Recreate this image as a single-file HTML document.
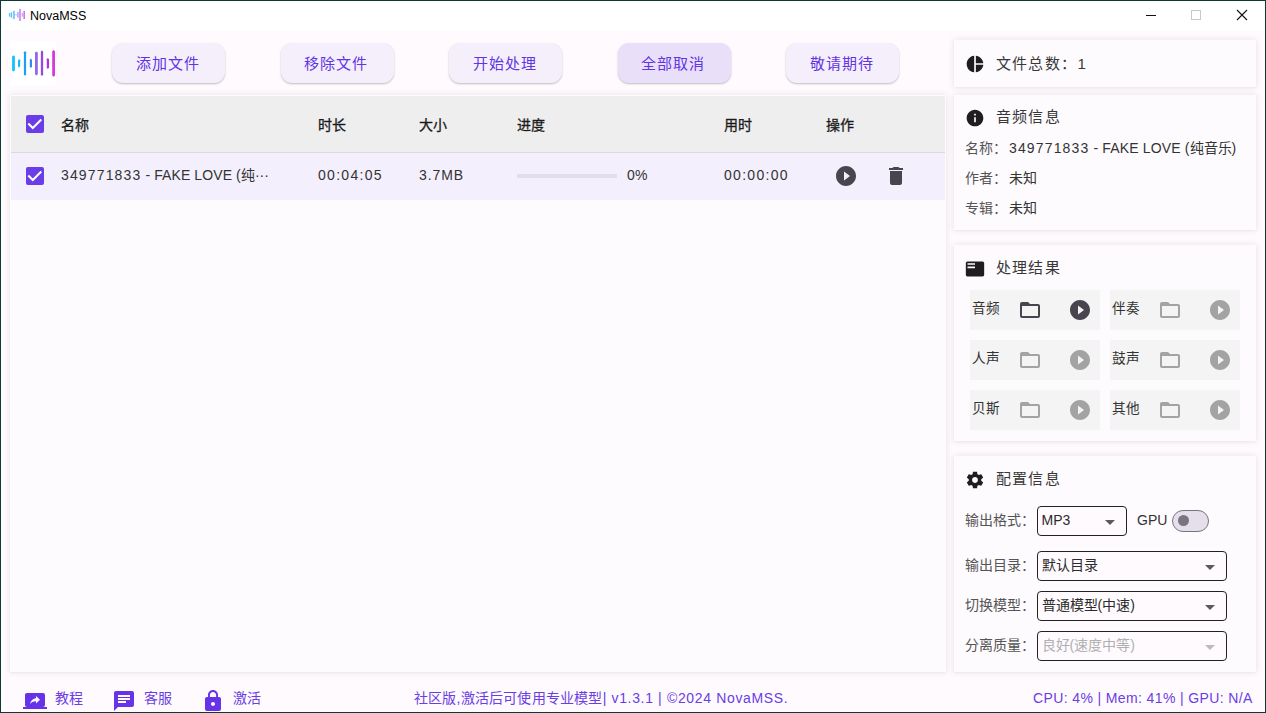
<!DOCTYPE html>
<html lang="zh-CN"><head><meta charset="utf-8">
<style>
*{margin:0;padding:0;box-sizing:border-box}
html,body{width:1266px;height:713px;overflow:hidden}
body{position:relative;font-family:"Liberation Sans",sans-serif;background:#fefafe;color:#333}
.abs{position:absolute}
#frame{position:absolute;left:0;top:0;width:1266px;height:713px;border:1px solid #0e3a34;pointer-events:none;z-index:50}
#title{left:0;top:0;width:1266px;height:31px;background:#fff}
.btn{position:absolute;top:43px;width:113px;height:40px;border-radius:11px;background:#f4effb;box-shadow:0 1px 2px rgba(0,0,0,.25);color:#6234e4;font-size:15px;letter-spacing:.9px;line-height:40px;text-align:center;padding:1px 1.5px 0 0}
.card{position:absolute;background:#fefbfe;box-shadow:0 0 6px 1px rgba(0,0,0,.075),0 1px 2px rgba(0,0,0,.03)}
.th{position:absolute;top:116px;font-size:14px;color:#1a1a1a;-webkit-text-stroke:.3px #1a1a1a;line-height:18px}
.td{position:absolute;top:166px;font-size:14px;color:#333;line-height:18px}
.chk{position:absolute;width:18px;height:18px;border-radius:2px;background:#6a3de8}
.chk svg{position:absolute;left:0;top:0}
.lbl{position:absolute;font-size:14px;color:#555;line-height:18px}
.val{position:absolute;font-size:14px;color:#333;line-height:18px}
.ctitle{position:absolute;font-size:15px;letter-spacing:1.4px;color:#383838;line-height:20px;margin-top:-.5px;margin-left:-.5px}
.cell{position:absolute;width:129.5px;height:40px;background:#f4f4f4}
.cell .t{position:absolute;left:1.5px;top:10px;font-size:13.6px;color:#333;line-height:18px}
.sel{position:absolute;border:1px solid #222;border-radius:4px;height:30px;background:#fefafe}
.sel .t{position:absolute;left:3.5px;top:4.3px;font-size:14px;color:#2b2b2b;line-height:18px}
.sel .ar{position:absolute;top:13px;width:0;height:0;border-left:5px solid transparent;border-right:5px solid transparent;border-top:5px solid #5a5a5a}
.foot{position:absolute;top:689px;font-size:14px;color:#6a3ee2;line-height:18px}
</style></head><body>
<div id="frame"></div>
<div id="title" class="abs"></div>
<div class="abs" style="left:30px;top:9px;font-size:12.5px;color:#000;line-height:15px">NovaMSS</div>

<!-- toolbar buttons -->
<div class="btn" style="left:112px">添加文件</div>
<div class="btn" style="left:280.5px">移除文件</div>
<div class="btn" style="left:449px">开始处理</div>
<div class="btn" style="left:617.5px;background:#e9dff8">全部取消</div>
<div class="btn" style="left:786px">敬请期待</div>

<!-- table card -->
<div class="card" style="left:10px;top:95px;width:936px;height:577px"></div>
<div class="abs" style="left:11px;top:96px;width:934px;height:56px;background:#eeeeee"></div>
<div class="abs" style="left:11px;top:152px;width:934px;height:1px;background:#dcd8e4"></div>
<div class="abs" style="left:11px;top:153px;width:934px;height:47px;background:#f3effc"></div>

<div class="th" style="left:61px">名称</div>
<div class="th" style="left:318px">时长</div>
<div class="th" style="left:419px">大小</div>
<div class="th" style="left:517px">进度</div>
<div class="th" style="left:724px">用时</div>
<div class="th" style="left:826px">操作</div>

<div class="td" style="left:61px"><span style="letter-spacing:1.15px">349771833</span><span style="letter-spacing:.1px"> - FAKE LOVE (</span>纯···</div>
<div class="td" style="left:318px;letter-spacing:1.3px">00:04:05</div>
<div class="td" style="left:419px;letter-spacing:.9px">3.7MB</div>
<div class="abs" style="left:517px;top:174px;width:100px;height:4px;background:#e4deeb"></div>
<div class="td" style="left:627px;letter-spacing:.3px">0%</div>
<div class="td" style="left:724px;letter-spacing:1.3px">00:00:00</div>

<!-- right cards -->
<div class="card" style="left:954px;top:40px;width:302px;height:47px"></div>
<div class="card" style="left:954px;top:95px;width:302px;height:135px"></div>
<div class="card" style="left:954px;top:245px;width:302px;height:196px"></div>
<div class="card" style="left:954px;top:456px;width:302px;height:216px"></div>

<div class="ctitle" style="left:996px;top:54px">文件总数：1</div>
<div class="ctitle" style="left:996px;top:107px">音频信息</div>
<div class="lbl" style="left:965px;top:139px">名称：</div><div class="val" style="left:1009px;top:139px"><span style="letter-spacing:1.15px">349771833</span><span style="letter-spacing:.15px"> - FAKE LOVE (</span>纯音乐)</div>
<div class="lbl" style="left:965px;top:169px">作者：</div><div class="val" style="left:1009px;top:169px">未知</div>
<div class="lbl" style="left:965px;top:199px">专辑：</div><div class="val" style="left:1009px;top:199px">未知</div>

<div class="ctitle" style="left:996px;top:258px">处理结果</div>
<div class="cell" style="left:970px;top:290px"><div class="t">音频</div></div>
<div class="cell" style="left:1110px;top:290px"><div class="t">伴奏</div></div>
<div class="cell" style="left:970px;top:340px"><div class="t">人声</div></div>
<div class="cell" style="left:1110px;top:340px"><div class="t">鼓声</div></div>
<div class="cell" style="left:970px;top:390px"><div class="t">贝斯</div></div>
<div class="cell" style="left:1110px;top:390px"><div class="t">其他</div></div>

<div class="ctitle" style="left:996px;top:469px">配置信息</div>
<div class="lbl" style="left:965px;top:511px">输出格式：</div>
<div class="sel" style="left:1037px;top:506px;width:90px"><div class="t">MP3</div><div class="ar" style="left:67px"></div></div>
<div class="val" style="left:1137px;top:511px">GPU</div>
<div class="lbl" style="left:965px;top:556px">输出目录：</div>
<div class="sel" style="left:1037px;top:551px;width:190px"><div class="t">默认目录</div><div class="ar" style="left:167px"></div></div>
<div class="lbl" style="left:965px;top:596px">切换模型：</div>
<div class="sel" style="left:1037px;top:591px;width:190px"><div class="t">普通模型(中速)</div><div class="ar" style="left:167px"></div></div>
<div class="lbl" style="left:965px;top:636px">分离质量：</div>
<div class="sel" style="left:1037px;top:631px;width:190px"><div class="t" style="color:#b0b0b0">良好(速度中等)</div><div class="ar" style="left:167px;border-top-color:#bbb"></div></div>

<!-- footer -->
<div class="foot" style="left:55px">教程</div>
<div class="foot" style="left:144px">客服</div>
<div class="foot" style="left:233px">激活</div>
<div class="foot" style="left:414px;letter-spacing:.2px">社区版,激活后可使用专业模型<span style="letter-spacing:.65px">| v1.3.1 | ©2024 NovaMSS.</span></div>
<div class="foot" style="left:1033px;letter-spacing:.38px">CPU: 4% | Mem: 41% | GPU: N/A</div>

<!-- title icon -->
<svg class="abs" style="left:0px;top:0px" width="30" height="30" viewBox="0 0 30 30"><rect x="14" y="14.3" width="4" height="1" fill="#a8d0f6"/><rect x="8.90" y="13.10" width="1.3" height="3.55" fill="#40c8f8"/><rect x="10.75" y="12.20" width="1.3" height="5.50" fill="#5cc0f8"/><rect x="12.95" y="10.80" width="1.9" height="8.30" fill="#7cc6f8"/><rect x="17.15" y="11.90" width="1.5" height="5.80" fill="#b8a8f0"/><rect x="19.05" y="8.90" width="1.9" height="12.10" fill="#c49ef0"/><rect x="21.75" y="13.00" width="1.3" height="3.80" fill="#dca0f0"/><rect x="23.40" y="10.90" width="1.6" height="8.10" fill="#e070e8"/></svg>
<!-- window controls -->
<div class="abs" style="left:1146px;top:15px;width:10px;height:1px;background:#111"></div>
<div class="abs" style="left:1191px;top:10px;width:10px;height:10px;border:1px solid #c8c8c8"></div>
<svg class="abs" style="left:1236px;top:9px" width="12" height="12" viewBox="0 0 12 12"><path d="M1 1L11 11M11 1L1 11" stroke="#111" stroke-width="1.1"/></svg>

<!-- big logo -->
<div class="abs" style="left:11px;top:41px;width:45px;height:45px;background:#fff"></div>
<svg class="abs" style="left:11px;top:41px" width="45" height="45" viewBox="0 0 45 45"><path fill="#12c4f8" d="M2.50 14.20L3.90 15.40V29.40L2.50 30.60L1.10 29.40V15.40Z"/><path fill="#18b8f8" d="M8.10 18.00L9.15 19.20V25.40L8.10 26.60L7.05 25.40V19.20Z"/><path fill="#1a9ef8" d="M14.00 10.10L15.10 11.30V33.50L14.00 34.70L12.90 33.50V11.30Z"/><path fill="#2a8cf4" d="M19.90 17.50L21.00 18.70V25.80L19.90 27.00L18.80 25.80V18.70Z"/><path fill="#9468ea" d="M25.40 10.40L26.80 11.60V33.20L25.40 34.40L24.00 33.20V11.60Z"/><path fill="#9c44e2" d="M31.00 9.40L32.15 10.60V33.80L31.00 35.00L29.85 33.80V10.60Z"/><path fill="#b030da" d="M36.90 17.00L38.00 18.20V26.80L36.90 28.00L35.80 26.80V18.20Z"/><path fill="#d838dc" d="M42.60 9.10L44.00 10.30V34.50L42.60 35.70L41.20 34.50V10.30Z"/></svg>

<!-- checkboxes -->
<div class="chk" style="left:26px;top:115px"><svg width="18" height="18" viewBox="0 0 18 18"><path d="M2.3 8.5L6.8 13L15.3 4.5" fill="none" stroke="#fff" stroke-width="2"/></svg></div>
<div class="chk" style="left:26px;top:167px"><svg width="18" height="18" viewBox="0 0 18 18"><path d="M2.3 8.5L6.8 13L15.3 4.5" fill="none" stroke="#fff" stroke-width="2"/></svg></div>

<!-- row actions -->
<svg class="abs" style="left:833.6px;top:164px" width="24" height="24" viewBox="0 0 24 24"><path fill="#49454f" d="M12 2C6.48 2 2 6.48 2 12s4.48 10 10 10 10-4.48 10-10S17.52 2 12 2zm-2 14.5v-9l6 4.5-6 4.5z"/></svg>
<svg class="abs" style="left:883.5px;top:164px" width="24" height="24" viewBox="0 0 24 24"><path fill="#49454f" d="M6 19c0 1.1.9 2 2 2h8c1.1 0 2-.9 2-2V7H6v12zM19 4h-3.5l-1-1h-5l-1 1H5v2h14V4z"/></svg>

<!-- card icons -->
<svg class="abs" style="left:965px;top:54px" width="20" height="20" viewBox="0 0 24 24"><path fill="#1e1e1e" d="M11 2v20c-5.07-.5-9-4.79-9-10s3.93-9.5 9-10zm2.03 0v8.99H22c-.47-4.74-4.24-8.52-8.97-8.99zm0 11.01V22c4.74-.47 8.5-4.25 8.97-8.99h-8.97z"/></svg>
<svg class="abs" style="left:965px;top:108px" width="20" height="20" viewBox="0 0 24 24"><path fill="#1e1e1e" d="M12 2C6.48 2 2 6.48 2 12s4.48 10 10 10 10-4.48 10-10S17.52 2 12 2zm1 15h-2v-6h2v6zm0-8h-2V7h2v2z"/></svg>
<svg class="abs" style="left:965px;top:259px" width="20" height="20" viewBox="0 0 24 24"><path fill="#1e1e1e" d="M21 3H3c-1.1 0-2 .9-2 2v14c0 1.1.9 2 2 2h18c1.1 0 2-.9 2-2V5c0-1.1-.9-2-2-2zm-9 8H3V9h9v2zm0-4H3V5h9v2z"/></svg>
<svg class="abs" style="left:965px;top:470px" width="20" height="20" viewBox="0 0 24 24"><path fill="#1e1e1e" d="M19.43 12.98c.04-.32.07-.64.07-.98s-.03-.66-.07-.98l2.11-1.65c.19-.15.24-.42.12-.64l-2-3.46c-.12-.22-.39-.3-.61-.22l-2.49 1c-.52-.4-1.08-.73-1.690-.98l-.38-2.65C14.46 2.18 14.25 2 14 2h-4c-.25 0-.46.18-.49.42l-.38 2.65c-.61.25-1.17.59-1.69.98l-2.49-1c-.23-.09-.49 0-.61.22l-2 3.46c-.13.22-.07.49.12.64l2.11 1.65c-.04.32-.07.65-.07.98s.03.66.07.98l-2.110 1.65c-.19.15-.24.42-.12.64l2 3.46c.12.22.39.3.61.22l2.49-1c.52.4 1.08.73 1.69.98l.38 2.65c.03.24.24.42.49.42h4c.25 0 .46-.18.49-.42l.38-2.65c.61-.25 1.17-.59 1.69-.98l2.49 1c.23.09.49 0 .61-.22l2-3.46c.12-.22.07-.49-.12-.64l-2.11-1.65zM12 15.5c-1.93 0-3.5-1.57-3.5-3.5s1.57-3.5 3.5-3.5 3.5 1.57 3.5 3.5-1.57 3.5-3.5 3.5z"/></svg>

<!-- result cell icons -->
<svg class="abs" style="left:1017.6px;top:298px" width="24" height="24" viewBox="0 0 24 24"><path fill="#49454f" d="M20 6h-8l-2-2H4c-1.1 0-1.99.9-1.99 2L2 18c0 1.1.9 2 2 2h16c1.1 0 2-.9 2-2V8c0-1.1-.9-2-2-2zm0 12H4V8h16v10z"/></svg>
<svg class="abs" style="left:1067.6px;top:298px" width="24" height="24" viewBox="0 0 24 24"><path fill="#49454f" d="M12 2C6.48 2 2 6.48 2 12s4.48 10 10 10 10-4.48 10-10S17.52 2 12 2zm-2 14.5v-9l6 4.5-6 4.5z"/></svg>
<svg class="abs" style="left:1157.6px;top:298px" width="24" height="24" viewBox="0 0 24 24"><path fill="#a3a3a3" d="M20 6h-8l-2-2H4c-1.1 0-1.99.9-1.99 2L2 18c0 1.1.9 2 2 2h16c1.1 0 2-.9 2-2V8c0-1.1-.9-2-2-2zm0 12H4V8h16v10z"/></svg>
<svg class="abs" style="left:1207.6px;top:298px" width="24" height="24" viewBox="0 0 24 24"><path fill="#a3a3a3" d="M12 2C6.48 2 2 6.48 2 12s4.48 10 10 10 10-4.48 10-10S17.52 2 12 2zm-2 14.5v-9l6 4.5-6 4.5z"/></svg>
<svg class="abs" style="left:1017.6px;top:348px" width="24" height="24" viewBox="0 0 24 24"><path fill="#a3a3a3" d="M20 6h-8l-2-2H4c-1.1 0-1.99.9-1.99 2L2 18c0 1.1.9 2 2 2h16c1.1 0 2-.9 2-2V8c0-1.1-.9-2-2-2zm0 12H4V8h16v10z"/></svg>
<svg class="abs" style="left:1067.6px;top:348px" width="24" height="24" viewBox="0 0 24 24"><path fill="#a3a3a3" d="M12 2C6.48 2 2 6.48 2 12s4.48 10 10 10 10-4.48 10-10S17.52 2 12 2zm-2 14.5v-9l6 4.5-6 4.5z"/></svg>
<svg class="abs" style="left:1157.6px;top:348px" width="24" height="24" viewBox="0 0 24 24"><path fill="#a3a3a3" d="M20 6h-8l-2-2H4c-1.1 0-1.99.9-1.99 2L2 18c0 1.1.9 2 2 2h16c1.1 0 2-.9 2-2V8c0-1.1-.9-2-2-2zm0 12H4V8h16v10z"/></svg>
<svg class="abs" style="left:1207.6px;top:348px" width="24" height="24" viewBox="0 0 24 24"><path fill="#a3a3a3" d="M12 2C6.48 2 2 6.48 2 12s4.48 10 10 10 10-4.48 10-10S17.52 2 12 2zm-2 14.5v-9l6 4.5-6 4.5z"/></svg>
<svg class="abs" style="left:1017.6px;top:398px" width="24" height="24" viewBox="0 0 24 24"><path fill="#a3a3a3" d="M20 6h-8l-2-2H4c-1.1 0-1.99.9-1.99 2L2 18c0 1.1.9 2 2 2h16c1.1 0 2-.9 2-2V8c0-1.1-.9-2-2-2zm0 12H4V8h16v10z"/></svg>
<svg class="abs" style="left:1067.6px;top:398px" width="24" height="24" viewBox="0 0 24 24"><path fill="#a3a3a3" d="M12 2C6.48 2 2 6.48 2 12s4.48 10 10 10 10-4.48 10-10S17.52 2 12 2zm-2 14.5v-9l6 4.5-6 4.5z"/></svg>
<svg class="abs" style="left:1157.6px;top:398px" width="24" height="24" viewBox="0 0 24 24"><path fill="#a3a3a3" d="M20 6h-8l-2-2H4c-1.1 0-1.99.9-1.99 2L2 18c0 1.1.9 2 2 2h16c1.1 0 2-.9 2-2V8c0-1.1-.9-2-2-2zm0 12H4V8h16v10z"/></svg>
<svg class="abs" style="left:1207.6px;top:398px" width="24" height="24" viewBox="0 0 24 24"><path fill="#a3a3a3" d="M12 2C6.48 2 2 6.48 2 12s4.48 10 10 10 10-4.48 10-10S17.52 2 12 2zm-2 14.5v-9l6 4.5-6 4.5z"/></svg>

<!-- toggle -->
<div class="abs" style="left:1172px;top:510px;width:37px;height:22px;border-radius:11px;background:#e5dfeb;border:1.6px solid #79747e"></div>
<div class="abs" style="left:1177.7px;top:515.2px;width:11px;height:11px;border-radius:50%;background:#79747e"></div>

<!-- footer icons -->
<svg class="abs" style="left:23px;top:689px" width="24" height="24" viewBox="0 0 24 24"><path fill="#6633e8" d="M20 18c1.1 0 1.99-.9 1.99-2L22 6c0-1.11-.9-2-2-2H4c-1.11 0-2 .89-2 2v10c0 1.1.89 2 2 2H0v2h24v-2h-4zm-7-3.53v-2.19c-2.78 0-4.61.85-6 2.72.56-2.67 2.11-5.33 6-5.87V7l4 3.73-3.99 3.74z"/></svg>
<svg class="abs" style="left:112px;top:689px" width="24" height="24" viewBox="0 0 24 24"><path fill="#6633e8" d="M20 2H4c-1.1 0-1.99.9-1.99 2L2 22l4-4h14c1.1 0 2-.9 2-2V4c0-1.1-.9-2-2-2zM6 9h12v2H6V9zm8 5H6v-2h8v2zm4-6H6V6h12v2z"/></svg>
<svg class="abs" style="left:201px;top:689px" width="24" height="24" viewBox="0 0 24 24"><path fill="#6633e8" d="M18 8h-1V6c0-2.76-2.24-5-5-5S7 3.24 7 6v2H6c-1.1 0-2 .9-2 2v10c0 1.1.9 2 2 2h12c1.1 0 2-.9 2-2V10c0-1.1-.9-2-2-2zm-6 9c-1.1 0-2-.9-2-2s.9-2 2-2 2 .9 2 2-.9 2-2 2zm3.1-9H8.9V6c0-1.71 1.39-3.1 3.1-3.1 1.71 0 3.1 1.39 3.1 3.1v2z"/></svg>
</body></html>
